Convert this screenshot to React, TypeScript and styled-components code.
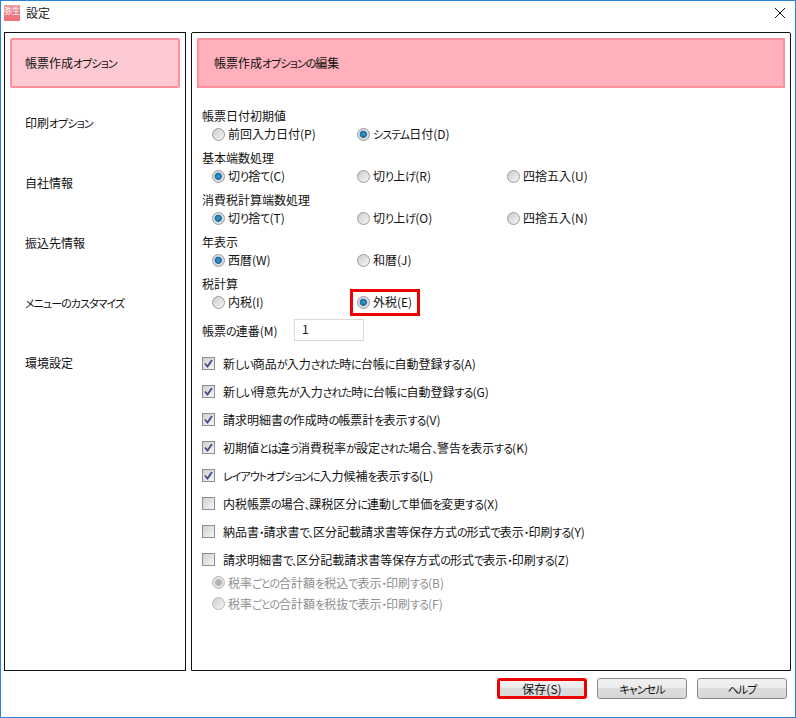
import styled, { createGlobalStyle } from 'styled-components'

const GlobalStyle = createGlobalStyle`
  html, body {
    margin: 0;
    padding: 0;
    background: #fff;
  }
  * {
    box-sizing: border-box;
  }
`

const menuItems = [
  '帳票作成オプション',
  '印刷オプション',
  '自社情報',
  '振込先情報',
  'メニューのカスタマイズ',
  '環境設定',
]

const radioGroups = [
  {
    title: '帳票日付初期値',
    options: [
      { label: '前回入力日付(P)' },
      { label: 'システム日付(D)', checked: true },
    ],
  },
  {
    title: '基本端数処理',
    options: [
      { label: '切り捨て(C)', checked: true },
      { label: '切り上げ(R)' },
      { label: '四捨五入(U)' },
    ],
  },
  {
    title: '消費税計算端数処理',
    options: [
      { label: '切り捨て(T)', checked: true },
      { label: '切り上げ(O)' },
      { label: '四捨五入(N)' },
    ],
  },
  {
    title: '年表示',
    options: [
      { label: '西暦(W)', checked: true },
      { label: '和暦(J)' },
    ],
  },
  {
    title: '税計算',
    options: [
      { label: '内税(I)' },
      { label: '外税(E)', checked: true, marked: true },
    ],
  },
]

const checkItems = [
  { label: '新しい商品が入力された時に台帳に自動登録する(A)', checked: true },
  { label: '新しい得意先が入力された時に台帳に自動登録する(G)', checked: true },
  { label: '請求明細書の作成時の帳票計を表示する(V)', checked: true },
  { label: '初期値とは違う消費税率が設定された場合、警告を表示する(K)', checked: true },
  { label: 'レイアウトオプションに入力候補を表示する(L)', checked: true },
  { label: '内税帳票の場合、課税区分に連動して単価を変更する(X)', checked: false },
  { label: '納品書・請求書で、区分記載請求書等保存方式の形式で表示・印刷する(Y)', checked: false },
  { label: '請求明細書で、区分記載請求書等保存方式の形式で表示・印刷する(Z)', checked: false },
]

// the dialog's UI font has much narrower kana than kanji
const JpText = ({ text }: { text: string }) => (
  <span>
    {text.split(/([\u3040-\u30ff、]+)/).map((part, i) =>
      i % 2 === 1 ? <S_Kana key={i}>{part}</S_Kana> : part
    )}
  </span>
)

const App = () => {
  return (
    <S_Window>
      <GlobalStyle />
      <S_TitleBar>
        <S_AppIcon>弥生</S_AppIcon>
        <S_Title>設定</S_Title>
        <S_Close>
          <svg width="12" height="12" viewBox="0 0 12 12">
            <path d="M1 1 L11 11 M11 1 L1 11" stroke="#111" strokeWidth="1" fill="none" />
          </svg>
        </S_Close>
      </S_TitleBar>

      <S_Main>
        <S_Sidebar>
          {menuItems.map((item, i) => (
            <S_MenuItem key={item} $active={i === 0}><JpText text={item} /></S_MenuItem>
          ))}
        </S_Sidebar>

        <S_Panel>
          <S_PanelHeader><JpText text="帳票作成オプションの編集" /></S_PanelHeader>
          <S_Form>
            {radioGroups.map((group) => (
              <S_Group key={group.title}>
                <S_GroupTitle>{group.title}</S_GroupTitle>
                <S_RadioRow>
                  {group.options.map((option) => (
                    <S_RadioOption key={option.label} $marked={option.marked}>
                      <S_Radio $checked={option.checked} />
                      <JpText text={option.label} />
                    </S_RadioOption>
                  ))}
                </S_RadioRow>
              </S_Group>
            ))}

            <S_SerialRow>
              <S_SerialLabel><JpText text="帳票の連番(M)" /></S_SerialLabel>
              <S_SerialInput>1</S_SerialInput>
            </S_SerialRow>

            <S_Checks>
              {checkItems.map((item) => (
                <S_CheckRow key={item.label}>
                  <S_Checkbox>
                    {item.checked && (
                      <svg width="9" height="9" viewBox="0 0 9 9">
                        <path d="M1 4.5 L3.5 7.5 L8 1" stroke="#3b4a8c" strokeWidth="1.8" fill="none" />
                      </svg>
                    )}
                  </S_Checkbox>
                  <JpText text={item.label} />
                </S_CheckRow>
              ))}
            </S_Checks>

            <S_SubOptions>
              <S_SubOption>
                <S_Radio $checked $disabled />
                <JpText text="税率ごとの合計額を税込で表示・印刷する(B)" />
              </S_SubOption>
              <S_SubOption>
                <S_Radio $disabled />
                <JpText text="税率ごとの合計額を税抜で表示・印刷する(F)" />
              </S_SubOption>
            </S_SubOptions>
          </S_Form>
        </S_Panel>
      </S_Main>

      <S_Footer>
        <S_Button $marked><JpText text="保存(S)" /></S_Button>
        <S_Button><JpText text="キャンセル" /></S_Button>
        <S_Button><JpText text="ヘルプ" /></S_Button>
      </S_Footer>
    </S_Window>
  )
}

export default App

const S_Window = styled.div`
  width: 796px;
  height: 718px;
  border: 1px solid #2b83d6;
  background: #fff;
  color: #111;
  font-family: "Noto Sans CJK JP", "Noto Sans", sans-serif;
  font-size: 12px;
  font-feature-settings: "palt";
  display: flex;
  flex-direction: column;
  overflow: hidden;
`

const S_Kana = styled.span`
  font-size: 11px;
  letter-spacing: -0.95px;
`

const S_TitleBar = styled.div`
  height: 31px;
  flex: none;
  display: flex;
  align-items: center;
  padding: 0 9px 7px 3px;
`

const S_AppIcon = styled.div`
  width: 16px;
  height: 16px;
  background: linear-gradient(#e8a0a6 0, #ef7f88 45%, #ef7078 100%);
  color: #fff;
  font-size: 8px;
  line-height: 12px;
  text-align: center;
  overflow: hidden;
  white-space: nowrap;
  font-feature-settings: normal;
`

const S_Title = styled.div`
  margin: 0 0 2px 6px;
  font-size: 12px;
  color: #222;
`

const S_Close = styled.div`
  margin-left: auto;
  display: flex;
`

const S_Main = styled.div`
  height: 639px;
  flex: none;
  display: flex;
  gap: 5px;
  padding: 0 4px 0 3px;
`

const S_Sidebar = styled.div`
  width: 182px;
  border: 1px solid #111;
  padding: 5px;
  display: flex;
  flex-direction: column;
  gap: 10px;
`

const S_MenuItem = styled.div<{ $active?: boolean }>`
  height: 50px;
  flex: none;
  display: flex;
  align-items: center;
  padding: 0 0 2px 13px;
  border-radius: 2px;
  border: 2px solid ${(p) => (p.$active ? '#fe8f9d' : 'transparent')};
  background: ${(p) => (p.$active ? '#fecad2' : 'transparent')};
`

const S_Panel = styled.div`
  width: 600px;
  border: 1px solid #111;
  border-radius: 2px 2px 0 0;
  padding: 5px;
`

const S_PanelHeader = styled.div`
  height: 50px;
  display: flex;
  align-items: center;
  padding: 0 0 1px 15px;
  border: 2px solid #fe8f9d;
  background: #ffb0bb;
`

const S_Form = styled.div`
  padding: 19px 0 0 5px;
`

const S_Group = styled.div`
  height: 42px;
`

const S_GroupTitle = styled.div`
  height: 18px;
  line-height: 18px;
`

const S_RadioRow = styled.div`
  display: grid;
  grid-template-columns: 145px 150px 1fr;
  padding-left: 10px;
  height: 18px;
`

const S_RadioOption = styled.div<{ $marked?: boolean }>`
  position: relative;
  display: flex;
  align-items: center;
  gap: 3px;
  line-height: 18px;

  ${(p) => p.$marked && `
    &::after {
      content: '';
      box-sizing: border-box;
      position: absolute;
      left: -7px;
      top: -4px;
      width: 70px;
      height: 27px;
      border: 3px solid #ee0000;
    }
  `}
`

const S_Radio = styled.span<{ $checked?: boolean; $disabled?: boolean }>`
  width: 13px;
  height: 13px;
  flex: none;
  border-radius: 50%;
  border: 1px solid ${(p) => (p.$disabled ? '#b8b8b8' : '#9a9b9b')};
  background: ${(p) => {
    if (p.$checked && p.$disabled) return 'radial-gradient(circle, #b4b4b4 0 3px, #e2e2e2 3.8px)'
    if (p.$checked) return 'radial-gradient(circle at 48% 48%, #3f9fd2 0, #1a6a9e 3.2px, #d5dbe0 4px, #e4e4e4 100%)'
    return 'linear-gradient(135deg, #cccccc, #f6f6f6)'
  }};
`

const S_SerialRow = styled.div`
  height: 24px;
  margin-top: 1px;
  display: flex;
  align-items: center;
`

const S_SerialLabel = styled.div`
  width: 92px;
`

const S_SerialInput = styled.div`
  width: 70px;
  height: 22px;
  border: 1px solid #d9d9d9;
  padding-left: 7px;
  line-height: 18px;
`

const S_Checks = styled.div`
  margin-top: 7px;
  display: flex;
  flex-direction: column;
`

const S_CheckRow = styled.div`
  height: 28px;
  display: flex;
  align-items: center;
  gap: 8px;
`

const S_Checkbox = styled.span`
  width: 13px;
  height: 13px;
  flex: none;
  border: 1px solid #8e8f8f;
  background: linear-gradient(135deg, #d0d0d0, #f6f6f6);
  display: flex;
  align-items: center;
  justify-content: center;
`

const S_SubOptions = styled.div`
  padding: 0 0 0 10px;
  margin-top: -1px;
  display: flex;
  flex-direction: column;
`

const S_SubOption = styled.div`
  height: 21px;
  display: flex;
  align-items: center;
  gap: 3px;
  color: #8f8f8f;
`

const S_Footer = styled.div`
  flex: 1;
  display: flex;
  justify-content: flex-end;
  gap: 10px;
  padding: 7px 8px 0 0;
`

const S_Button = styled.div<{ $marked?: boolean }>`
  width: 90px;
  height: 21px;
  display: flex;
  align-items: center;
  justify-content: center;
  border-radius: 3px;
  border: ${(p) => (p.$marked ? '3px solid #ee0000' : '1px solid #8a8a8a')};
  background: linear-gradient(#f2f2f2 0, #ebebeb 50%, #dcdcdc 50%, #d8d8d8 100%);
`
